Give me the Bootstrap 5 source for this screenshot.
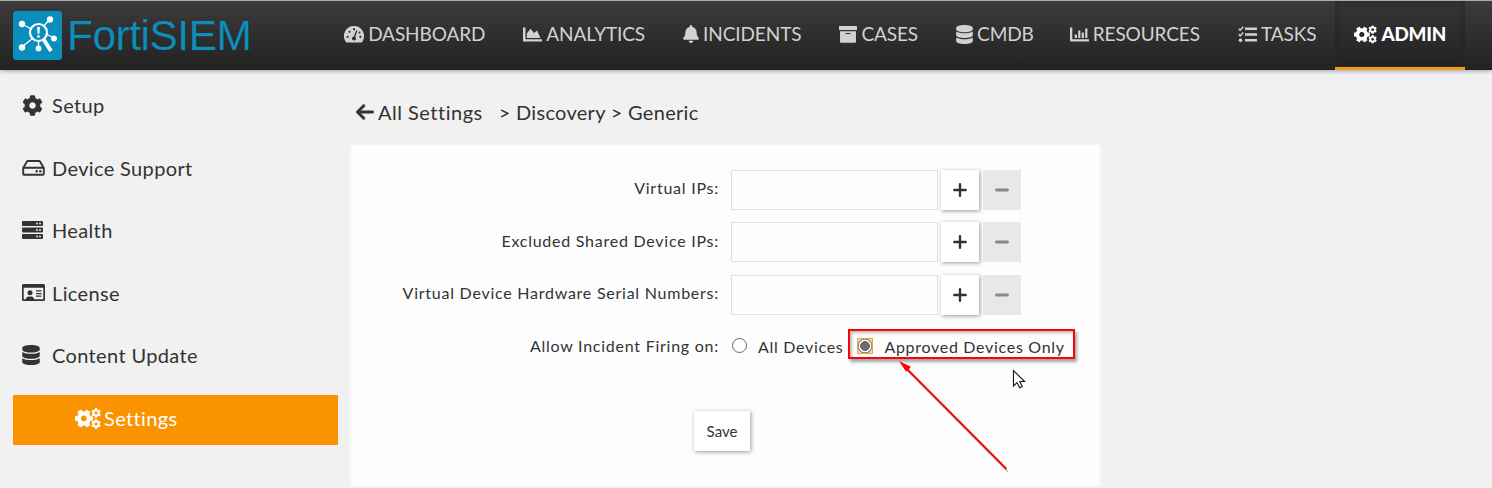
<!DOCTYPE html>
<html lang="en">
<head>
<meta charset="utf-8">
<title>FortiSIEM</title>
<link href="https://cdn.jsdelivr.net/npm/bootstrap@5.3.0/dist/css/bootstrap.min.css" rel="stylesheet">
<style>
body{font-family:Lato,"Open Sans",sans-serif;background:#f1f1f1;color:#333;height:488px;overflow:hidden}
svg{display:block;flex:none;fill:currentColor}
.topbar{height:70px;background:linear-gradient(#3b3b3b,#222);border-top:1px solid #a9aeac;box-shadow:0 1px 4px rgba(0,0,0,.35);padding:0 27px 0 13px}
.brand-mark{width:49px;height:49px;margin-top:-1px}
.brand-name{font:400 42.5px/50px "Liberation Sans",sans-serif;color:#0b8fbd;letter-spacing:-.5px;margin-left:5px;white-space:nowrap;-webkit-text-stroke:.2px #2d2d2d}
.topnav{height:69px}
.topnav .nav-link{height:69px;padding:0 19px;color:#d2d2d2;font-size:19px;line-height:24px;letter-spacing:-.1px;gap:4px;border-bottom:3px solid transparent;border-radius:0}
.topnav .nav-link.tight{padding-right:17px}
.topnav .nav-link.active{font-weight:900;font-size:18.8px;letter-spacing:-.2px;color:#fff;background:linear-gradient(#353535,#232323);border-bottom-color:#f7961e;box-shadow:inset 0 0 6px #222}
.side{width:325px;margin-left:13px;padding-top:12px;gap:12.5px}
.side a{height:50px;color:#333;font-size:20px;letter-spacing:.36px;padding:0 0 3px 9px;text-decoration:none}
.side a:nth-child(odd){padding-bottom:4px}
.side .slot{width:30px}
.side a.current{height:50px;background:#fb9300;color:#fff;padding-left:62px}
.side a.current .slot{width:29px}
.main-col{width:749px;margin-left:13px}
.crumbs{height:75px;padding:9px 0 0 5px;font-size:20px;letter-spacing:.5px}
.crumbs .trail{letter-spacing:.3px}
.panel{height:341px;background:#fdfdfd;box-shadow:0 0 4px #fafafa;padding-top:25px}
.frow{height:40px;margin-bottom:12.4px}
.flabel{width:368px;padding-bottom:4px;font-size:16px;letter-spacing:.75px;text-align:right;white-space:nowrap}
.frow:nth-child(even) .flabel{padding-bottom:2px}
.frow .form-control{width:207px;height:40px;margin-left:12px;border:1px solid #dedede;border-radius:0;background:#fefefe}
.sq{width:38px;height:40px;padding:0;border:0;border-radius:0}
.sq-add{margin-left:3px;background:#fff;box-shadow:1px 1px 4px rgba(0,0,0,.4);color:#333}
.sq-del,.sq-del:disabled{margin-left:4px;background:#e8e8e8;color:#888;opacity:1;width:38px}
.opt{font-size:16px;letter-spacing:.7px;white-space:nowrap}
.opt .form-check-input{flex:none;width:15px;height:15px;margin:0 11px 3px 13px;border:1px solid #666;background:#fff}
.opt .form-check-input:checked{width:16px;height:16px;margin:0 11px 3px 14px;border:1px solid #eaa53c;border-radius:0;background:radial-gradient(circle at center,#6d6d6d 0 4.6px,#fff 5.2px 6px,#888 6.6px 7.2px,#f8dca8 7.8px)}
.save-btn{width:56px;height:40px;padding:2px 0 0;border:0;border-radius:0;background:#fff;color:#333;font-size:15px;box-shadow:1px 1px 4px rgba(0,0,0,.4)}
.hilite{left:497px;top:184px;width:227px;height:30px;border:2px solid #f80505;box-shadow:2px 3px 3px rgba(0,0,0,.35),inset 2px 2px 3px rgba(0,0,0,.25)}
.overlay-art{left:540px;top:210px}
</style>
</head>
<body>
<svg width="0" height="0" class="position-absolute">
<symbol id="cog" viewBox="0 0 512 512"><path d="M487.4 315.7l-42.6-24.6c4.3-23.2 4.3-47 0-70.2l42.6-24.6c4.9-2.8 7.1-8.6 5.5-14-11.1-35.6-30-67.8-54.7-94.6-3.8-4.1-10-5.1-14.8-2.3L380.8 110c-17.9-15.4-38.5-27.3-60.8-35.1V25.8c0-5.6-3.9-10.5-9.4-11.7-36.7-8.2-74.3-7.8-109.2 0-5.5 1.2-9.4 6.1-9.4 11.7V75c-22.2 7.9-42.8 19.8-60.8 35.1L88.7 85.5c-4.9-2.8-11-1.9-14.8 2.3-24.7 26.7-43.6 58.9-54.7 94.6-1.7 5.4.6 11.2 5.5 14L67.3 221c-4.3 23.2-4.3 47 0 70.2l-42.6 24.6c-4.9 2.8-7.1 8.6-5.5 14 11.1 35.6 30 67.8 54.7 94.6 3.8 4.1 10 5.1 14.8 2.3l42.6-24.6c17.9 15.4 38.5 27.3 60.8 35.1v49.2c0 5.6 3.9 10.5 9.4 11.7 36.7 8.2 74.3 7.8 109.2 0 5.5-1.2 9.4-6.1 9.4-11.7v-49.2c22.2-7.9 42.8-19.8 60.8-35.1l42.6 24.6c4.9 2.8 11 1.9 14.8-2.3 24.7-26.7 43.6-58.9 54.7-94.6 1.5-5.5-.7-11.3-5.6-14.1zM256 336c-44.1 0-80-35.9-80-80s35.9-80 80-80 80 35.9 80 80-35.9 80-80 80z"/></symbol>
<symbol id="cogs" viewBox="0 0 25 20"><use href="#cog" x="-.5" y="1" width="18" height="18" transform="rotate(30 8.5 10)"/><use href="#cog" x="15.5" y="0" width="9.5" height="9.5"/><use href="#cog" x="15.5" y="10.5" width="9.5" height="9.5"/></symbol>
<symbol id="db" viewBox="0 0 448 512"><path d="M448 73.143v45.714C448 159.143 347.667 192 224 192S0 159.143 0 118.857V73.143C0 32.857 100.333 0 224 0s224 32.857 224 73.143zM448 176v102.857C448 319.143 347.667 352 224 352S0 319.143 0 278.857V176c48.125 33.143 136.208 48.572 224 48.572S399.874 209.143 448 176zm0 160v102.857C448 479.143 347.667 512 224 512S0 479.143 0 438.857V336c48.125 33.143 136.208 48.572 224 48.572S399.874 369.143 448 336z"/></symbol>
<symbol id="plus" viewBox="0 0 14 14"><path d="M7 1.3v11.4M1.3 7h11.4" stroke="currentColor" stroke-width="2.4" stroke-linecap="round"/></symbol>
<symbol id="minus" viewBox="0 0 14 14"><path d="M1.5 7h11" stroke="currentColor" stroke-width="2.8" stroke-linecap="round"/></symbol>
</svg>

<header class="topbar d-flex align-items-center justify-content-between">
  <div class="d-flex align-items-center">
    <svg class="brand-mark" viewBox="0 0 49 49"><rect width="49" height="49" rx="3.5" fill="#0a8fbc"/><g stroke="#fff" stroke-width="1.3" fill="#fff"><path d="M9 13l11 6M37 8l-7 8M9 36l11-9M25.500 29v9M33 23l8 4"/><circle cx="9" cy="13" r="2.500"/><circle cx="37" cy="8.500" r="2.500"/><circle cx="9" cy="36.500" r="2.500"/><circle cx="25.500" cy="37.500" r="2.300"/><circle cx="41" cy="27.500" r="2.300"/><circle cx="25.500" cy="21.500" r="8.500" fill="#0a8fbc" stroke-width="2.200"/><path d="M31 29l7 11" stroke-width="4"/></g><path d="M24 16h3l-.7 7h-1.600z" fill="#fff"/><circle cx="25.500" cy="25.500" r="1.300" fill="#fff"/></svg>
    <span class="brand-name">FortiSIEM</span>
  </div>
  <nav class="nav topnav flex-nowrap">
    <a class="nav-link d-flex align-items-center"><svg width="20" height="17" viewBox="0 0 20 17"><path fill-rule="evenodd" d="M10 0a10 10 0 0 1 8.700 15q-.6 1.500-1.700 1.500H3Q1.900 16.500 1.300 15A10 10 0 0 1 10 0z"/><g fill="#2d2d2d"><circle cx="3.600" cy="10.800" r="1.100"/><circle cx="5.500" cy="5.800" r="1.100"/><circle cx="10" cy="3.200" r="1.100"/><circle cx="16.400" cy="10.800" r="1.100"/><circle cx="15.500" cy="6.500" r="1"/><circle cx="10" cy="12.500" r="2"/></g><path d="M10 12.500L12.700 4.500" stroke="#2d2d2d" stroke-width="1.300"/></svg><span>DASHBOARD</span></a>
    <a class="nav-link d-flex align-items-center"><svg width="19" height="15" viewBox="0 0 19 15"><path d="M0 .5h2.500v11.800H19v2.200H1Q0 14.500 0 13.500zM3.800 11V6.500L7.500 1.700 11 6l3-2.500L17.500 11z"/></svg><span>ANALYTICS</span></a>
    <a class="nav-link d-flex align-items-center"><svg width="16" height="18" viewBox="0 0 448 512"><path d="M224 512c35.320 0 63.970-28.650 63.970-64H160.030c0 35.350 28.650 64 63.970 64zm215.390-149.710c-19.320-20.760-55.470-51.990-55.470-154.290 0-77.700-54.480-139.900-127.940-155.160V32c0-17.670-14.320-32-31.980-32s-31.980 14.330-31.980 32v20.840C118.560 68.100 64.080 130.300 64.080 208c0 102.300-36.150 133.530-55.470 154.290-6 6.450-8.660 14.160-8.610 21.710.11 16.400 12.980 32 32.100 32h383.800c19.120 0 32-15.600 32.100-32 .05-7.550-2.610-15.270-8.610-21.710z"/></svg><span>INCIDENTS</span></a>
    <a class="nav-link d-flex align-items-center"><svg width="18" height="17" viewBox="0 0 18 17"><path fill-rule="evenodd" d="M.7 0h16.600q.7 0 .7.700V4H0V.7Q0 0 .7 0zM1 5.200h16v10.500q0 1-1 1H2q-1 0-1-1zM6.600 7v.9h4.800V7z"/></svg><span>CASES</span></a>
    <a class="nav-link tight d-flex align-items-center"><svg width="17" height="19"><use href="#db"/></svg><span>CMDB</span></a>
    <a class="nav-link d-flex align-items-center"><svg width="19" height="15" viewBox="0 0 19 15"><path d="M0 .5h2.300v11.800H19v2.200H1Q0 14.500 0 13.500zM4.700 7.500H7V11H4.700zM8.200 3.500h2.200V11H8.200zM11.700 5.500h2.200V11h-2.200zM15.200 1.500h2.200V11h-2.200z"/></svg><span>RESOURCES</span></a>
    <a class="nav-link d-flex align-items-center"><svg width="19" height="17" viewBox="0 0 19 17"><path d="M7 1.500h12V4H7zM7 7.200h12v2.500H7zM7 13h12v2.500H7z"/><circle cx="2.500" cy="14.200" r="1.800"/><path d="M.7 2.700l1.500 1.500L5.300.8M.7 8.300l1.500 1.500 3.100-3.400" fill="none" stroke="currentColor" stroke-width="1.500"/></svg><span>TASKS</span></a>
    <a class="nav-link active d-flex align-items-center"><svg width="23" height="19"><use href="#cogs"/></svg><span>ADMIN</span></a>
  </nav>
</header>

<div class="d-flex">
  <aside class="side d-flex flex-column">
    <a class="d-flex align-items-center"><span class="slot"><svg width="21" height="21"><use href="#cog"/></svg></span>Setup</a>
    <a class="d-flex align-items-center"><span class="slot"><svg width="23" height="16" viewBox="0 0 23 16"><path d="M1.200 8L4.800 1.800Q5.200 1 6 1h11q.8 0 1.200.8L21.800 8v5.500q0 1.300-1.300 1.300h-18q-1.300 0-1.300-1.300zM1.200 7.800h20.600" fill="none" stroke="currentColor" stroke-width="1.900"/><circle cx="14.700" cy="11.200" r="1.200"/><circle cx="18.300" cy="11.200" r="1.200"/></svg></span>Device Support</a>
    <a class="d-flex align-items-center"><span class="slot"><svg width="21" height="18" viewBox="0 0 21 18"><rect width="21" height="5" rx="1"/><rect y="6.500" width="21" height="5" rx="1"/><rect y="13" width="21" height="5" rx="1"/><g fill="#f1f1f1"><circle cx="15" cy="2.500" r=".9"/><circle cx="18" cy="2.500" r=".9"/><circle cx="15" cy="9" r=".9"/><circle cx="18" cy="9" r=".9"/><circle cx="15" cy="15.500" r=".9"/><circle cx="18" cy="15.500" r=".9"/></g></svg></span>Health</a>
    <a class="d-flex align-items-center"><span class="slot"><svg width="23" height="18" viewBox="0 0 23 18"><path fill-rule="evenodd" d="M1.500 0h20Q23 0 23 1.500v14q0 1.500-1.500 1.500h-20Q0 17 0 15.500v-14Q0 0 1.500 0zM1.700 3.800v11.500h2.200q.3-2.800 2.800-2.800h2.600q2.500 0 2.800 2.800h9.200V3.800z"/><circle cx="8" cy="8.700" r="2.500"/><path d="M14 6.300h5.500v1.300H14zM14 8.900h5.500v1.300H14zM14 11.500h5.500v1.300H14z"/></svg></span>License</a>
    <a class="d-flex align-items-center"><span class="slot"><svg width="18" height="20"><use href="#db"/></svg></span>Content Update</a>
    <a class="current d-flex align-items-center"><span class="slot"><svg width="26" height="21"><use href="#cogs"/></svg></span>Settings</a>
  </aside>

  <main class="main-col">
    <div class="crumbs d-flex align-items-center"><svg width="18" height="20" viewBox="0 0 448 512"><path d="M9.400 233.400c-12.500 12.500-12.500 32.800 0 45.300l160 160c12.500 12.500 32.800 12.500 45.300 0s12.500-32.800 0-45.300L109.200 288 416 288c17.700 0 32-14.300 32-32s-14.300-32-32-32l-306.700 0L214.600 118.600c12.500-12.500 12.500-32.800 0-45.300s-32.800-12.500-45.300 0l-160 160z" stroke="currentColor" stroke-width="12"/></svg><span class="ms-1">All Settings</span><span class="trail ms-3">&gt; Discovery &gt; Generic</span></div>
    <section class="panel position-relative">
      <div class="frow d-flex align-items-center"><label class="flabel">Virtual IPs:</label><input class="form-control"><button class="btn sq sq-add d-flex align-items-center justify-content-center"><svg width="14" height="14"><use href="#plus"/></svg></button><button disabled class="btn sq sq-del d-flex align-items-center justify-content-center"><svg width="14" height="14"><use href="#minus"/></svg></button></div>
      <div class="frow d-flex align-items-center"><label class="flabel">Excluded Shared Device IPs:</label><input class="form-control"><button class="btn sq sq-add d-flex align-items-center justify-content-center"><svg width="14" height="14"><use href="#plus"/></svg></button><button disabled class="btn sq sq-del d-flex align-items-center justify-content-center"><svg width="14" height="14"><use href="#minus"/></svg></button></div>
      <div class="frow d-flex align-items-center"><label class="flabel">Virtual Device Hardware Serial Numbers:</label><input class="form-control"><button class="btn sq sq-add d-flex align-items-center justify-content-center"><svg width="14" height="14"><use href="#plus"/></svg></button><button disabled class="btn sq sq-del d-flex align-items-center justify-content-center"><svg width="14" height="14"><use href="#minus"/></svg></button></div>
      <div class="frow d-flex align-items-center"><label class="flabel">Allow Incident Firing on:</label>
        <div class="opt d-flex align-items-center"><input type="radio" name="fire" class="form-check-input"><span>All Devices</span><input type="radio" name="fire" checked class="form-check-input"><span>Approved Devices Only</span></div>
      </div>
      <div class="d-flex" style="padding:31px 0 0 343px"><button class="btn save-btn">Save</button></div>
      <div class="hilite position-absolute"></div>
      <svg class="overlay-art position-absolute" width="150" height="122" viewBox="891 355 150 122"><path d="M904 367l104 105" stroke="#000" stroke-opacity=".25" stroke-width="1.500"/><path d="M904 366L1006.500 469" stroke="#f00" stroke-width="1.800"/><path d="M899 361l11.800 5.800-2 2.400-2.700 2.500z" fill="#f00"/><path d="M1013.500 370.500v15.500l3.600-3.400 2.600 5.200 2.600-1.200-2.500-5.100h4.800z" fill="#fff" stroke="#111" stroke-width="1.100"/></svg>
    </section>
  </main>
</div>
<script src="https://cdn.jsdelivr.net/npm/bootstrap@5.3.0/dist/js/bootstrap.bundle.min.js"></script>
</body>
</html>
